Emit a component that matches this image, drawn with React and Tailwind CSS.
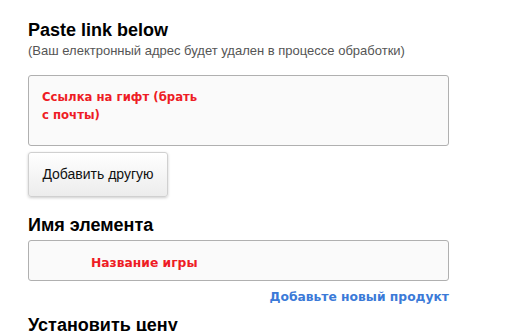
export default function App() {
  return (
    <div className="min-h-[331px] bg-white font-['Liberation_Sans',Arial,sans-serif] text-black">
      <div className="w-[421px] ml-[28px] pt-[20px]">
        {/* Paste link */}
        <h2 className="text-[18px] font-bold leading-[20px]">Paste link below</h2>
        <p className="text-[13px] leading-[16px] text-[#555] mt-[3px]">
          (Ваш електронный адрес будет удален в процессе обработки)
        </p>

        <div className="mt-[16px] h-[71px] rounded-[3px] border border-[#b0b0b0] bg-[#fafafa] pl-[13px] pt-[12px]">
          <div className="w-[158px] font-['DejaVu_Sans',Verdana,sans-serif] text-[11.7px] font-bold leading-[18px] text-[#ee1c25]">
            Ссылка на гифт (брать с почты)
          </div>
        </div>

        <button className="mt-[6px] h-[45px] w-[140px] rounded-[3px] border border-[#d0d0d0] bg-gradient-to-b from-white to-[#ececec] text-[14px] text-[#111] shadow-[0_1px_3px_rgba(0,0,0,0.2)]">
          Добавить другую
        </button>

        {/* Item name */}
        <h2 className="mt-[18px] text-[18px] font-bold leading-[20px]">Имя элемента</h2>
        <div className="mt-[5px] flex h-[41px] items-center rounded-[3px] border border-[#b0b0b0] bg-[#fafafa] pl-[62px] pt-[5px]">
          <span className="font-['DejaVu_Sans',Verdana,sans-serif] text-[12.3px] font-bold text-[#ee1c25]">
            Название игры
          </span>
        </div>
        <div className="mt-[7px] text-right font-['DejaVu_Sans',Verdana,sans-serif] text-[12.3px] font-bold leading-[18px] text-[#3b7ad8]">
          Добавьте новый продукт
        </div>

        {/* Price */}
        <h2 className="mt-[9px] text-[18px] font-bold leading-[20px]">Установить цену</h2>
      </div>
    </div>
  )
}
